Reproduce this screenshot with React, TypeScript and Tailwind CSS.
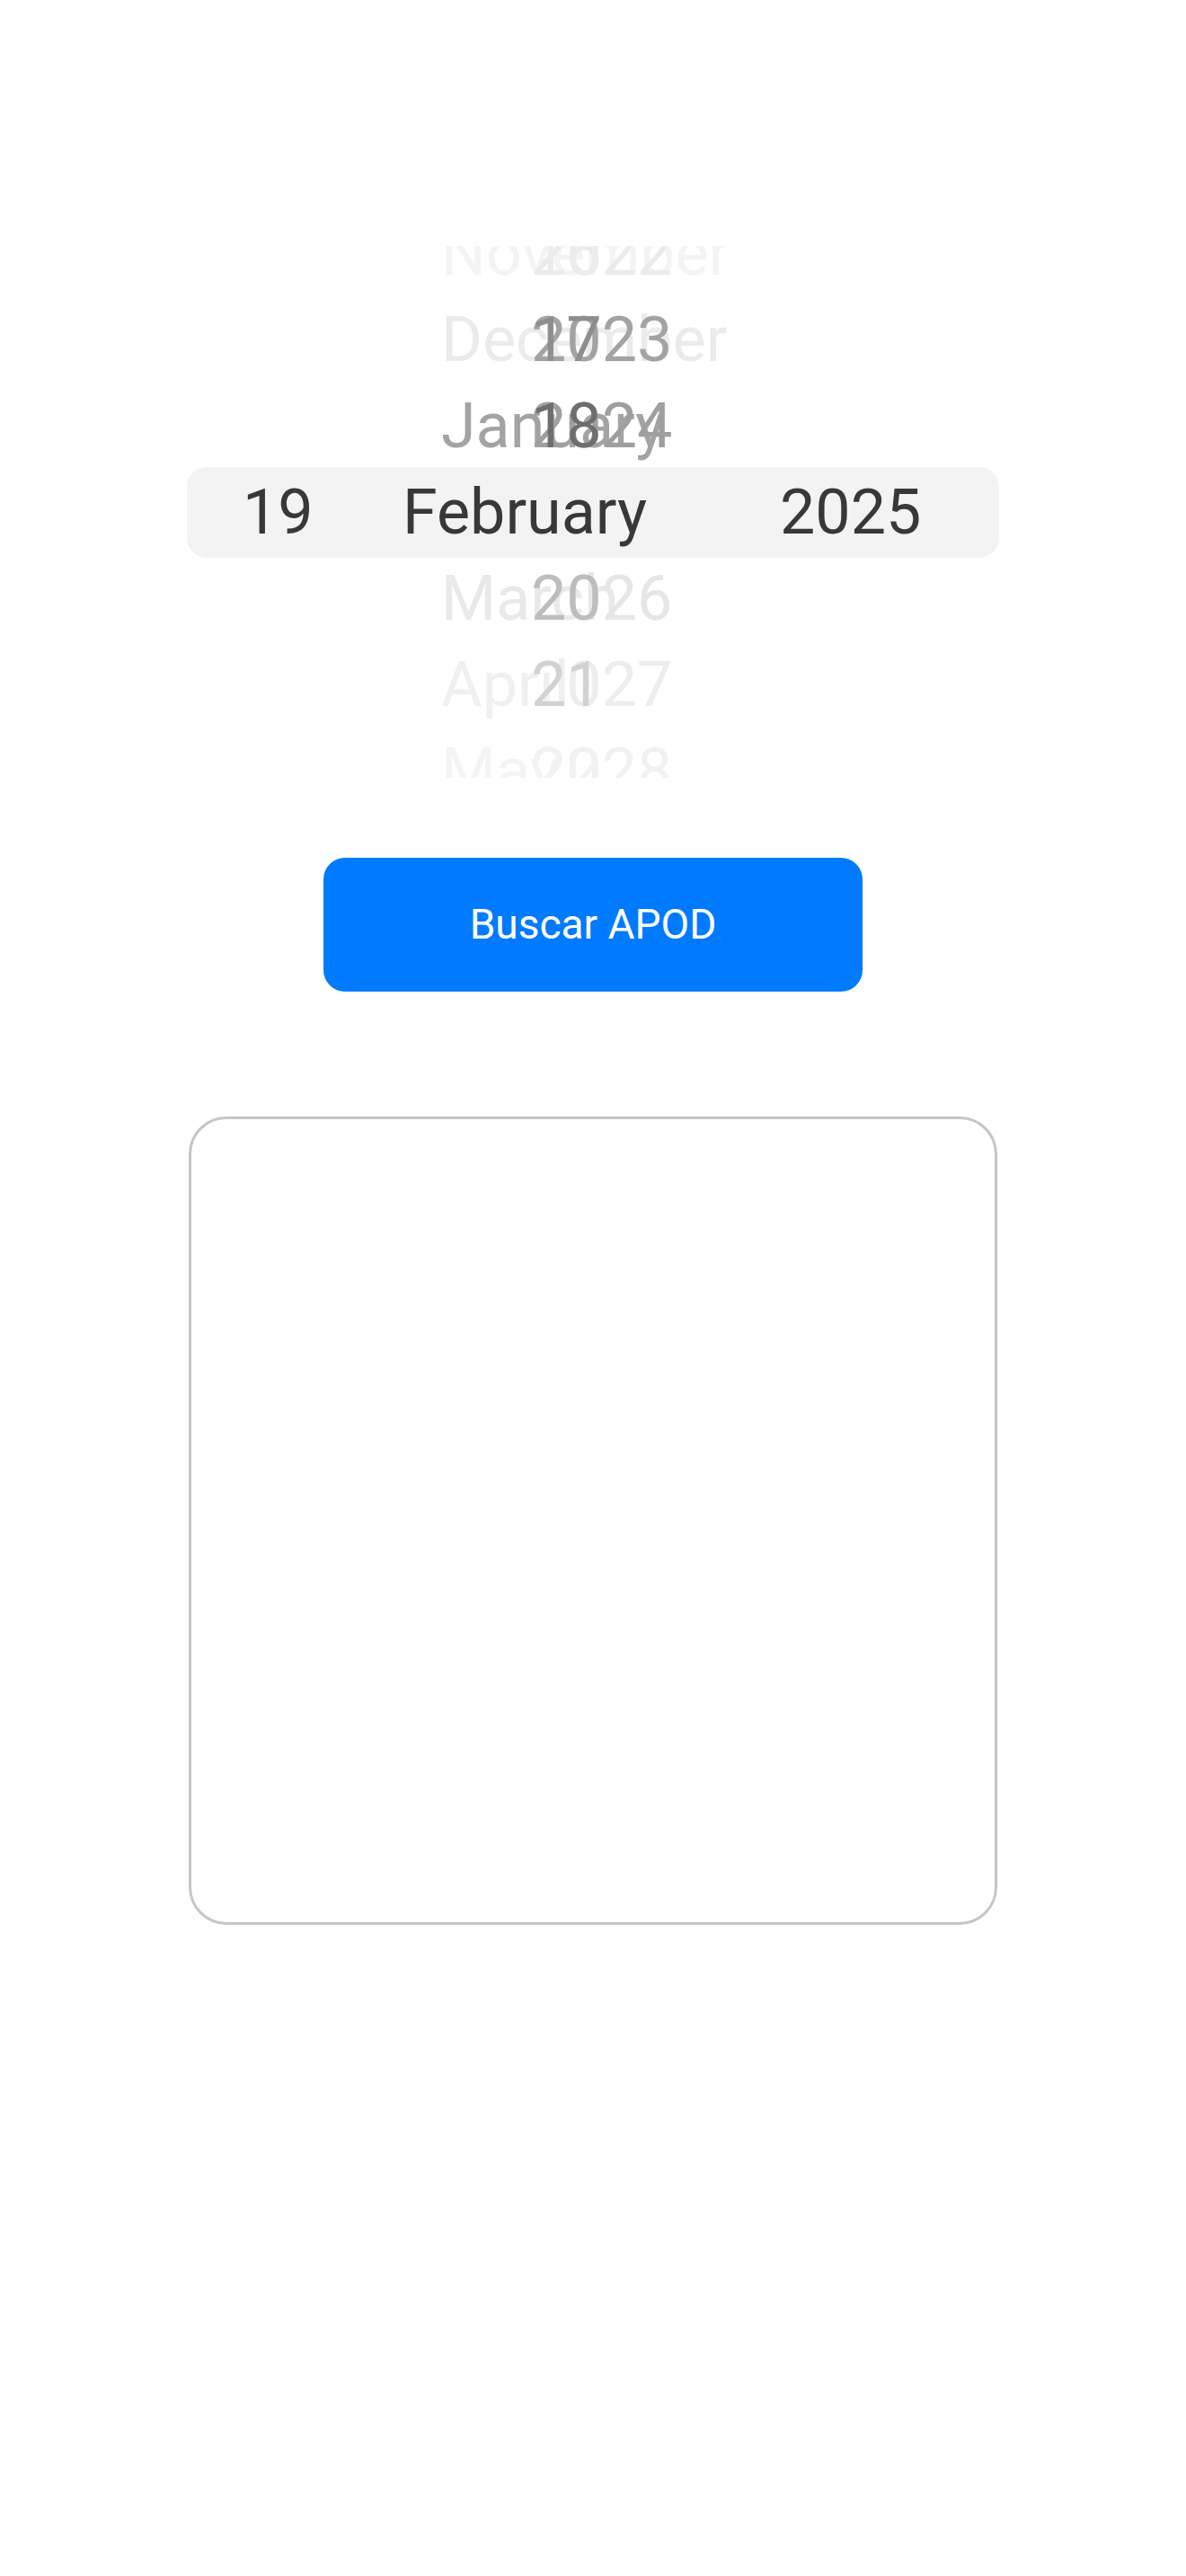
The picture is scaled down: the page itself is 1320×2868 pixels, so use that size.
import React from 'react';

interface PickerRow {
  day: string;
  month: string;
  year: string;
  dayColor: string;
  monthColor: string;
  yearColor: string;
}

// rows above and below the selected one, colours taken from the fade
const ROWS_ABOVE: PickerRow[] = [
  { day: '16', month: 'November', year: '2022', dayColor: 'text-[#ececec]', monthColor: 'text-[#f4f4f4]', yearColor: 'text-[#ebebeb]' },
  { day: '17', month: 'December', year: '2023', dayColor: 'text-[#8e8e8e]', monthColor: 'text-[#ebebeb]', yearColor: 'text-[#a3a3a3]' },
  { day: '18', month: 'January', year: '2024', dayColor: 'text-[#6e6e6e]', monthColor: 'text-[#a3a3a3]', yearColor: 'text-[#9f9f9f]' },
];

const ROWS_BELOW: PickerRow[] = [
  { day: '20', month: 'March', year: '2026', dayColor: 'text-[#bdbdbd]', monthColor: 'text-[#e9e9e9]', yearColor: 'text-[#e6e6e6]' },
  { day: '21', month: 'April', year: '2027', dayColor: 'text-[#d2d2d2]', monthColor: 'text-[#f0f0f0]', yearColor: 'text-[#ededed]' },
  { day: '22', month: 'May', year: '2028', dayColor: 'text-[#f2f2f2]', monthColor: 'text-[#f4f4f4]', yearColor: 'text-[#f1f1f1]' },
];

function FadedRow({ row }: { row: PickerRow }) {
  return (
    <div className="h-[96px] shrink-0 grid items-center">
      <span className={`col-start-1 row-start-1 pl-[283px] ${row.monthColor}`}>{row.month}</span>
      <span className={`col-start-1 row-start-1 pl-[383px] ${row.yearColor}`}>{row.year}</span>
      <span className={`col-start-1 row-start-1 pl-[383px] ${row.dayColor}`}>{row.day}</span>
    </div>
  );
}

function DatePicker() {
  return (
    <div className="mx-auto mt-[273px] w-[904px] h-[592px] overflow-hidden flex flex-col justify-center text-[70px] leading-none">
      {ROWS_ABOVE.map((r) => (
        <FadedRow key={r.month} row={r} />
      ))}
      <div className="h-[101px] shrink-0 -my-[2.5px] rounded-[22px] bg-[#f3f3f3] flex items-center text-[#383838]">
        <span className="pl-[62px] w-[240px]">19</span>
        <span className="w-[420px]">February</span>
        <span>2025</span>
      </div>
      {ROWS_BELOW.map((r) => (
        <FadedRow key={r.month} row={r} />
      ))}
    </div>
  );
}

export default function App() {
  return (
    <div className="min-h-[2868px] w-full bg-white flex flex-col items-center font-['Roboto',sans-serif] pt-px">
      <DatePicker />

      <button className="mt-[89px] w-[600px] h-[149px] rounded-[24px] bg-[#007aff] text-white text-[46px] flex items-center justify-center">
        Buscar APOD
      </button>

      <div className="mt-[139px] w-[900px] h-[900px] rounded-[42px] border-[3px] border-[#c6c6c6] bg-white" />
    </div>
  );
}
